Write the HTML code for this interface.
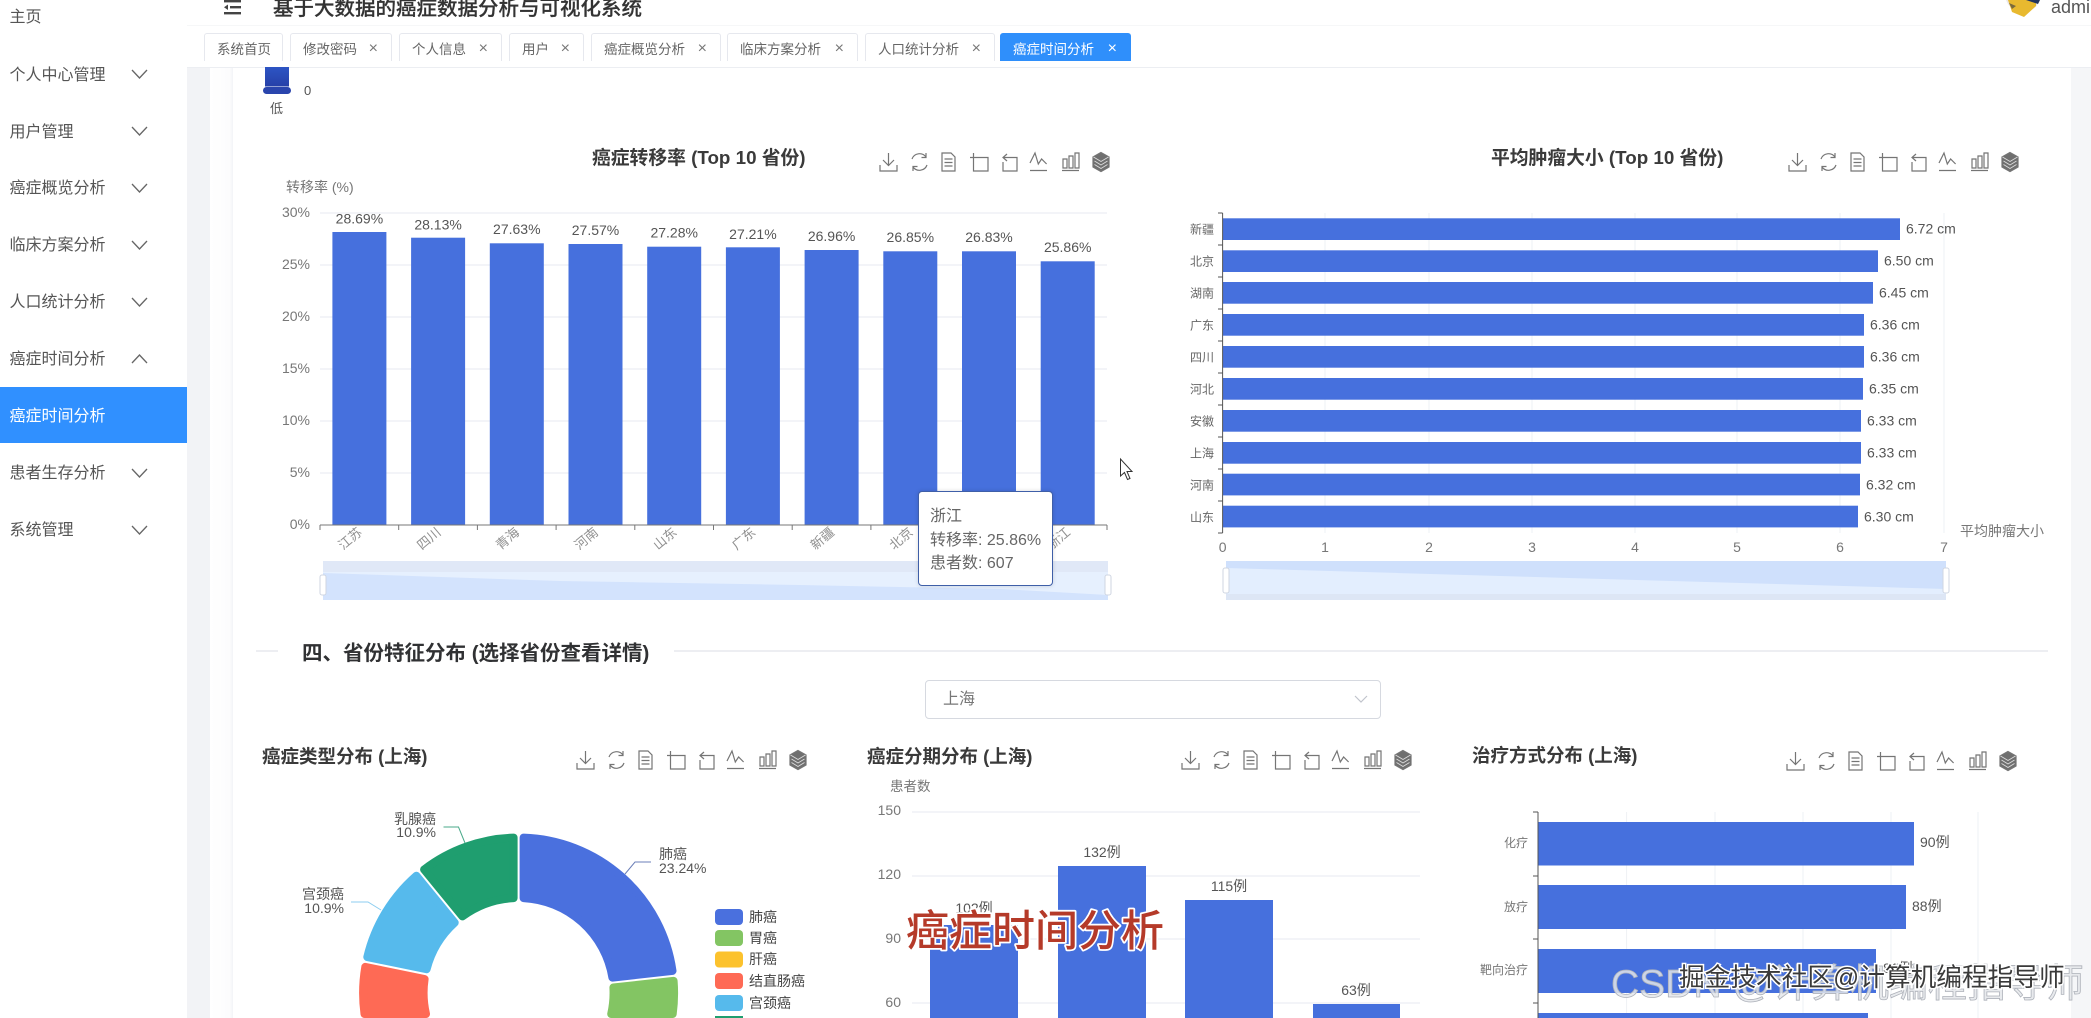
<!DOCTYPE html>
<html lang="zh"><head><meta charset="utf-8"><title>癌症时间分析</title>
<style>
html,body{margin:0;padding:0;background:#fff;overflow:hidden;width:2091px;height:1018px}
#p{position:relative;width:2091px;height:1018px;overflow:hidden;background:#fff;font-family:"Liberation Sans","Noto Sans CJK SC",sans-serif;color:#606266;filter:blur(.35px)}
.a{position:absolute}
.m{position:absolute;left:9.500px;font-size:16px;line-height:20px;color:#555;white-space:nowrap}
.tab{position:absolute;top:33px;height:28px;box-sizing:border-box;border:1px solid #e6e8ee;border-bottom:none;border-radius:3px 3px 0 0;font-size:13.500px;line-height:32px;padding-left:12px;color:#666;white-space:nowrap;background:#fff}
.tab i{position:absolute;right:13px;top:-1px;font-style:normal;font-size:16px;color:#777}
svg text{font-family:"Liberation Sans","Noto Sans CJK SC",sans-serif}
</style></head><body><div id="p">

<div class="a" style="left:187px;top:0;width:23px;height:1018px;background:#f2f3f6"></div>
<div class="a" style="left:210px;top:0;width:23px;height:1018px;background:linear-gradient(90deg,#fff 0,#fcfcfd 85%,#f3f4f7 100%)"></div>
<div class="a" style="left:2071px;top:0;width:20px;height:1018px;background:#f5f6f8"></div>

<!-- header -->
<div class="a" style="left:187px;top:0;width:1904px;height:25px;background:#fff;border-bottom:1px solid #f6f7f8"></div>
<div class="a" style="left:187px;top:26px;width:1904px;height:41px;background:#fff;border-bottom:1px solid #eceef2"></div>
<div class="a" style="left:273px;top:-4px;font-size:20.500px;line-height:26px;color:#333;font-weight:500;-webkit-text-stroke:.2px #333;white-space:nowrap">基于大数据的癌症数据分析与可视化系统</div>
<div class="a" style="left:2051px;top:-5px;font-size:18px;line-height:24px;color:#555;white-space:nowrap">admin</div>

<!-- tabs -->
<div class="tab" style="left:204px;width:79px">系统首页</div>
<div class="tab" style="left:290px;width:102px">修改密码<i>×</i></div>
<div class="tab" style="left:399px;width:103px">个人信息<i>×</i></div>
<div class="tab" style="left:509px;width:75px">用户<i>×</i></div>
<div class="tab" style="left:591px;width:130px">癌症概览分析<i>×</i></div>
<div class="tab" style="left:727px;width:131px">临床方案分析<i>×</i></div>
<div class="tab" style="left:865px;width:130px">人口统计分析<i>×</i></div>
<div class="tab" style="left:1000px;width:131px;background:#2f8ffb;border-color:#2f8ffb;color:#fff">癌症时间分析<i style="color:#fff">×</i></div>

<!-- sidebar -->
<div class="a" style="left:0;top:0;width:187px;height:1018px;background:#fff"></div>
<div class="a" style="left:0;top:387px;width:187px;height:56px;background:#3090ff"></div>
<div class="m" style="top:8px">主页</div>
<div class="m" style="top:66px">个人中心管理</div>
<div class="m" style="top:123px">用户管理</div>
<div class="m" style="top:179px">癌症概览分析</div>
<div class="m" style="top:236px">临床方案分析</div>
<div class="m" style="top:293px">人口统计分析</div>
<div class="m" style="top:350px">癌症时间分析</div>
<div class="m" style="top:407px;color:#fff">癌症时间分析</div>
<div class="m" style="top:464px">患者生存分析</div>
<div class="m" style="top:521px">系统管理</div>

<!-- select -->
<div class="a" style="left:925px;top:680px;width:456px;height:39px;box-sizing:border-box;border:1px solid #d6d9e0;border-radius:4px;font-size:16px;line-height:38px;padding-left:17px;color:#777;background:#fff">上海</div>

<svg class="a" style="left:0;top:0;display:block" width="2091" height="1018" viewBox="0 0 2091 1018" xmlns="http://www.w3.org/2000/svg">
<defs>
<g id="tb" fill="none" stroke="#757575" stroke-width="1.200">
 <path d="M8.500 0V12.500M3 7L8.500 12.500L14 7M0 12V18H17V12"/>
 <path d="M32 6A8 8 0 0 1 46 4M47 12A8 8 0 0 1 33 14M46 0V4.500H41.500M33 18V13.500H37.500"/>
 <path d="M62 0H71L75 4V18H62ZM64.500 6H72.500M64.500 9.500H72.500M64.500 13H72.500"/>
 <path d="M93.500 0V18H108V4.500H90"/>
 <path d="M127 1L123 4.500L127 8M123 4.500H137V18H123V9"/>
 <path d="M150 10L155 0L158.300 11L161.600 6L166.600 11M150 17.500H167"/>
 <path d="M183 6H187V15H183ZM189 3H193V15H189ZM195 0H199V15H195ZM182 17.500H199"/>
 <path d="M221 -.500L229 4V14L221 18.500L213 14V4Z" fill="#6f6f6f"/>
 <path d="M213.500 4L221 8.500L228.500 4M214.500 8L221 12L227.500 8M214.500 11.500L221 15.500L227.500 11.500" stroke="#ddd" stroke-width=".9"/>
</g>
<linearGradient id="lg" x1="0" y1="0" x2="0" y2="1"><stop offset="0" stop-color="#2d55c4"/><stop offset="1" stop-color="#2640a8"/></linearGradient>
</defs>

<!-- hamburger -->
<g fill="#444"><rect x="224" y="0" width="17" height="2.400"/><rect x="230" y="6" width="11" height="2.400"/><rect x="224" y="12" width="17" height="2.400"/><path d="M224 7.200L228 4.500V10Z"/></g>

<!-- avatar -->
<path d="M2006 0A18 18 0 0 0 2040 0Z" fill="#ece9ea"/>
<path d="M2008 0L2036 0L2036 6L2024 17L2012 12Z" fill="#e8b92f"/>
<path d="M2026 0L2040 0L2038 4Z" fill="#24365e"/>
<path d="M2009 3L2016 6L2012 9Z" fill="#7a6a3c"/>

<!-- chevrons -->
<g fill="none" stroke="#666" stroke-width="1.300">
<path d="M132 70L139.500 78L147 70M132 127L139.500 135L147 127M132 184L139.500 192L147 184M132 241L139.500 249L147 241M132 298L139.500 306L147 298M132 363L139.500 355L147 363M132 469L139.500 477L147 469M132 526L139.500 534L147 526"/>
</g>
<path d="M1355 696L1361 702L1367 696" fill="none" stroke="#c0c4cc" stroke-width="1.200"/>

<!-- visualmap legend -->
<rect x="265" y="67" width="24" height="19.500" fill="url(#lg)"/>
<rect x="263" y="87" width="28" height="7" rx="3.500" fill="#2a45ad"/>
<text x="304" y="95" font-size="13" fill="#555">0</text>
<text x="270" y="113" font-size="13" fill="#555">低</text>

<!-- CHART 1 -->
<text x="592" y="164" font-size="18.800" font-weight="700" fill="#3a3a3a">癌症转移率 (Top 10 省份)</text>
<use href="#tb" x="880" y="153"/>
<text x="286" y="192" font-size="14" fill="#777">转移率 (%)</text>
<g stroke="#eceef3" stroke-width="1.300"><path d="M320 213H1107M320 265H1107M320 317H1107M320 369H1107M320 421H1107M320 473H1107"/></g>
<g font-size="14" fill="#777" text-anchor="end">
<text x="310" y="217">30%</text><text x="310" y="269">25%</text><text x="310" y="321">20%</text><text x="310" y="373">15%</text><text x="310" y="425">10%</text><text x="310" y="477">5%</text><text x="310" y="529">0%</text>
</g>
<g fill="#4670dd">
<rect x="332.400" y="232" width="54" height="293"/><rect x="411.100" y="237.700" width="54" height="287.300"/><rect x="489.800" y="243.300" width="54" height="281.700"/><rect x="568.500" y="244" width="54" height="281"/><rect x="647.200" y="246.700" width="54" height="278.300"/><rect x="725.900" y="247.300" width="54" height="277.700"/><rect x="804.600" y="250" width="54" height="275"/><rect x="883.300" y="251.300" width="54" height="273.700"/><rect x="962" y="251.300" width="54" height="273.700"/><rect x="1040.700" y="261.300" width="54" height="263.700"/>
</g>
<path d="M320 525H1107M320 525V530M398.700 525V530M477.400 525V530M556.100 525V530M634.800 525V530M713.500 525V530M792.200 525V530M870.900 525V530M949.600 525V530M1028.300 525V530M1107 525V530" stroke="#777" stroke-width="1" fill="none"/>
<g font-size="14" fill="#555" text-anchor="middle">
<text x="359.400" y="223.500">28.69%</text><text x="438.100" y="229.500">28.13%</text><text x="516.800" y="234">27.63%</text><text x="595.500" y="235">27.57%</text><text x="674.200" y="237.500">27.28%</text><text x="752.900" y="239">27.21%</text><text x="831.600" y="241">26.96%</text><text x="910.300" y="242">26.85%</text><text x="989" y="242">26.83%</text><text x="1067.700" y="252">25.86%</text>
</g>
<g font-size="13" fill="#909090" text-anchor="middle">
<text transform="translate(353 542) rotate(-40)">江苏</text><text transform="translate(431.700 542) rotate(-40)">四川</text><text transform="translate(510.400 542) rotate(-40)">青海</text><text transform="translate(589.100 542) rotate(-40)">河南</text><text transform="translate(667.800 542) rotate(-40)">山东</text><text transform="translate(746.500 542) rotate(-40)">广东</text><text transform="translate(825.200 542) rotate(-40)">新疆</text><text transform="translate(903.900 542) rotate(-40)">北京</text><text transform="translate(982.600 542) rotate(-40)">河北</text><text transform="translate(1061.300 542) rotate(-40)">浙江</text>
</g>
<!-- datazoom 1 -->
<rect x="323" y="561" width="785" height="39" fill="#e6f0fe"/>
<rect x="323" y="561" width="785" height="11" fill="#e0e8f7"/>
<path d="M323 573L560 581L800 585L1000 589L1108 595V600H323Z" fill="#d3e3fd"/>
<rect x="320" y="575" width="6" height="20" rx="2" fill="#fff" stroke="#cfd6e2"/>
<rect x="1105" y="575" width="6" height="20" rx="2" fill="#fff" stroke="#cfd6e2"/>

<!-- CHART 2 -->
<text x="1491" y="164" font-size="18.800" font-weight="700" fill="#3a3a3a">平均肿瘤大小 (Top 10 省份)</text>
<use href="#tb" x="1789" y="153"/>
<path d="M1325 213V533M1429 213V533M1532 213V533M1635 213V533M1737 213V533M1840 213V533M1944 213V533" stroke="#eef0f4" stroke-width="1"/>
<g fill="#4670dd">
<rect x="1223" y="218.300" width="677" height="21.700"/><rect x="1223" y="250.300" width="655" height="21.700"/><rect x="1223" y="282" width="650" height="21.700"/><rect x="1223" y="314" width="641" height="21.700"/><rect x="1223" y="346" width="641" height="21.700"/><rect x="1223" y="378" width="640" height="21.700"/><rect x="1223" y="410" width="638" height="21.700"/><rect x="1223" y="442" width="638" height="21.700"/><rect x="1223" y="473.700" width="637" height="21.700"/><rect x="1223" y="505.700" width="635" height="21.700"/>
</g>
<path d="M1222.600 213V533M1218 213H1222.600M1218 245H1222.600M1218 277H1222.600M1218 309H1222.600M1218 341H1222.600M1218 373H1222.600M1218 405H1222.600M1218 437H1222.600M1218 469H1222.600M1218 501H1222.600M1218 533H1222.600" stroke="#555" stroke-width="1" fill="none"/>
<g font-size="12" fill="#666" text-anchor="end">
<text x="1214" y="233.500">新疆</text><text x="1214" y="265.500">北京</text><text x="1214" y="297.500">湖南</text><text x="1214" y="329.500">广东</text><text x="1214" y="361.500">四川</text><text x="1214" y="393.500">河北</text><text x="1214" y="425.500">安徽</text><text x="1214" y="457.500">上海</text><text x="1214" y="489.500">河南</text><text x="1214" y="521.500">山东</text>
</g>
<g font-size="14" fill="#555">
<text x="1906" y="233.500">6.72 cm</text><text x="1884" y="265.500">6.50 cm</text><text x="1879" y="297.500">6.45 cm</text><text x="1870" y="329.500">6.36 cm</text><text x="1870" y="361.500">6.36 cm</text><text x="1869" y="393.500">6.35 cm</text><text x="1867" y="425.500">6.33 cm</text><text x="1867" y="457.500">6.33 cm</text><text x="1866" y="489.500">6.32 cm</text><text x="1864" y="521.500">6.30 cm</text>
</g>
<g font-size="14" fill="#777" text-anchor="middle">
<text x="1222.600" y="552">0</text><text x="1325" y="552">1</text><text x="1429" y="552">2</text><text x="1532" y="552">3</text><text x="1635" y="552">4</text><text x="1737" y="552">5</text><text x="1840" y="552">6</text><text x="1944" y="552">7</text>
</g>
<text x="1960" y="536" font-size="14" fill="#777">平均肿瘤大小</text>
<!-- datazoom 2 -->
<rect x="1226" y="561" width="720" height="39" fill="#e3eefe"/>
<path d="M1226 561H1946V589L1226 568Z" fill="#cfe0fc"/>
<rect x="1226" y="594" width="720" height="6" fill="#dde6f5"/>
<rect x="1223" y="568" width="6" height="25" rx="2" fill="#fff" stroke="#cfd6e2"/>
<rect x="1943" y="568" width="6" height="25" rx="2" fill="#fff" stroke="#cfd6e2"/>

<!-- section heading -->
<path d="M256 651H278M674 651H2048" stroke="#e2e4e9" stroke-width="1.200"/>
<text x="302" y="660" font-size="20.500" font-weight="700" fill="#303133">四、省份特征分布 (选择省份查看详情)</text>

<!-- PIE -->
<text x="262" y="763" font-size="18.500" font-weight="700" fill="#3a3a3a">癌症类型分布 (上海)</text>
<use href="#tb" x="577" y="751"/>
<g stroke-width="8" stroke-linejoin="round">
<path d="M523.600 837.600A155.500 155.500 0 0 1 672.500 970.900L612.400 977.600A95 95 0 0 0 523.600 898.100Z" fill="#4a70de" stroke="#4a70de"/>
<path d="M673.600 980.900A155.500 155.500 0 0 1 672.700 1014L611.200 1014A95 95 0 0 0 613.400 987.500Z" fill="#83c563" stroke="#83c563"/>
<path d="M364.500 1014A155.500 155.500 0 0 1 365.300 966.900L424.600 979A95 95 0 0 0 426 1014Z" fill="#fe6a55" stroke="#fe6a55"/>
<path d="M367.300 957.100A155.500 155.500 0 0 1 416.400 875.800L454.700 922.700A95 95 0 0 0 426.600 969.200Z" fill="#56baec" stroke="#56baec"/>
<path d="M424.100 869.500A155.500 155.500 0 0 1 513.600 837.600L513.600 898.100A95 95 0 0 0 462.400 916.400Z" fill="#1f9e6f" stroke="#1f9e6f"/>
</g>
<g fill="none" stroke-width="1">
<path d="M625 874L635 862H651" stroke="#6b7fb8"/>
<path d="M465 843L458.500 827H443.500" stroke="#4aa98a"/>
<path d="M381 910L368 902H351" stroke="#8ccdf0"/>
</g>
<g font-size="14" fill="#555">
<text x="659" y="859">肺癌</text><text x="659" y="873">23.24%</text>
<text x="436" y="824" text-anchor="end">乳腺癌</text><text x="436" y="837" text-anchor="end">10.9%</text>
<text x="344" y="899" text-anchor="end">宫颈癌</text><text x="344" y="913" text-anchor="end">10.9%</text>
</g>
<rect x="715" y="909" width="28" height="16" rx="4" fill="#4a70de"/>
<rect x="715" y="930" width="28" height="16" rx="4" fill="#83c563"/>
<rect x="715" y="951.500" width="28" height="16" rx="4" fill="#fcc22d"/>
<rect x="715" y="973" width="28" height="16" rx="4" fill="#fe6a55"/>
<rect x="715" y="995" width="28" height="16" rx="4" fill="#56baec"/>
<rect x="715" y="1016" width="28" height="2" fill="#1f9e6f"/>
<g font-size="14" fill="#444">
<text x="749" y="922">肺癌</text><text x="749" y="943">胃癌</text><text x="749" y="964">肝癌</text><text x="749" y="986">结直肠癌</text><text x="749" y="1008">宫颈癌</text>
</g>

<!-- STAGE -->
<text x="867" y="763" font-size="18.500" font-weight="700" fill="#3a3a3a">癌症分期分布 (上海)</text>
<use href="#tb" x="1182" y="751"/>
<text x="890" y="791" font-size="13.500" fill="#777">患者数</text>
<path d="M912 812H1420M912 876H1420M912 939H1420M912 1003H1420" stroke="#eceef3" stroke-width="1.200"/>
<g font-size="14" fill="#777" text-anchor="end">
<text x="901" y="815">150</text><text x="901" y="879">120</text><text x="901" y="943">90</text><text x="901" y="1007">60</text>
</g>
<g fill="#4670dd">
<rect x="930" y="925" width="88" height="93"/><rect x="1058" y="866" width="88" height="152"/><rect x="1185" y="900" width="88" height="118"/><rect x="1313" y="1004" width="87" height="14"/>
</g>
<g font-size="14" fill="#555" text-anchor="middle">
<text x="974" y="913">102例</text><text x="1102" y="857">132例</text><text x="1229" y="891">115例</text><text x="1356" y="995">63例</text>
</g>

<!-- TREATMENT -->
<text x="1472" y="762" font-size="18.500" font-weight="700" fill="#3a3a3a">治疗方式分布 (上海)</text>
<use href="#tb" x="1787" y="752"/>
<path d="M1626.600 812V1018M1715 812V1018M1803 812V1018M1891 812V1018M1978 812V1018" stroke="#eef0f4" stroke-width="1"/>
<g fill="#4670dd">
<rect x="1538" y="822" width="376" height="43.500"/><rect x="1538" y="885" width="368" height="44"/><rect x="1538" y="949" width="338" height="44"/><rect x="1538" y="1013" width="330" height="5"/>
</g>
<path d="M1538 812V1018M1533 812H1538M1533 876H1538M1533 939H1538M1533 1003H1538" stroke="#555" stroke-width="1" fill="none"/>
<g font-size="12" fill="#777" text-anchor="end">
<text x="1528" y="847">化疗</text><text x="1528" y="911">放疗</text><text x="1528" y="974">靶向治疗</text>
</g>
<g font-size="14" fill="#555">
<text x="1920" y="847">90例</text><text x="1912" y="911">88例</text><text x="1883" y="973">81例</text>
</g>

<!-- cursor -->
<path d="M1120.500 459L1120.500 476L1124.500 472.500L1127.500 479.500L1130 478.500L1127 471.500L1132 471.500Z" fill="#fff" stroke="#333" stroke-width="1"/>

<!-- watermark layers -->
<text x="1611" y="997" font-size="39" fill="#e4e6ea" fill-opacity=".85" stroke="#aeb2ba" stroke-width=".8">CSDN @计算机编程指导师</text>
<text x="1679" y="986" font-size="25.700" fill="#3a3a3a" stroke="#fff" stroke-width="3" paint-order="stroke">掘金技术社区@计算机编程指导师</text>
<text x="906" y="946" font-size="43" font-weight="500" fill="#b53a29" stroke="#fff" stroke-width="3.500" paint-order="stroke" stroke-linejoin="round">癌症时间分析</text>
</svg>

<!-- tooltip -->
<div class="a" style="left:918px;top:491px;width:135px;height:95px;box-sizing:border-box;background:#fff;border:1px solid #3f5fa8;border-radius:4px;padding:13px 0 0 11px;font-size:16px;line-height:23.500px;color:#666;white-space:nowrap;box-shadow:0 0 4px rgba(0,0,0,.15)">浙江<br>转移率: 25.86%<br>患者数: 607</div>

</div></body></html>
